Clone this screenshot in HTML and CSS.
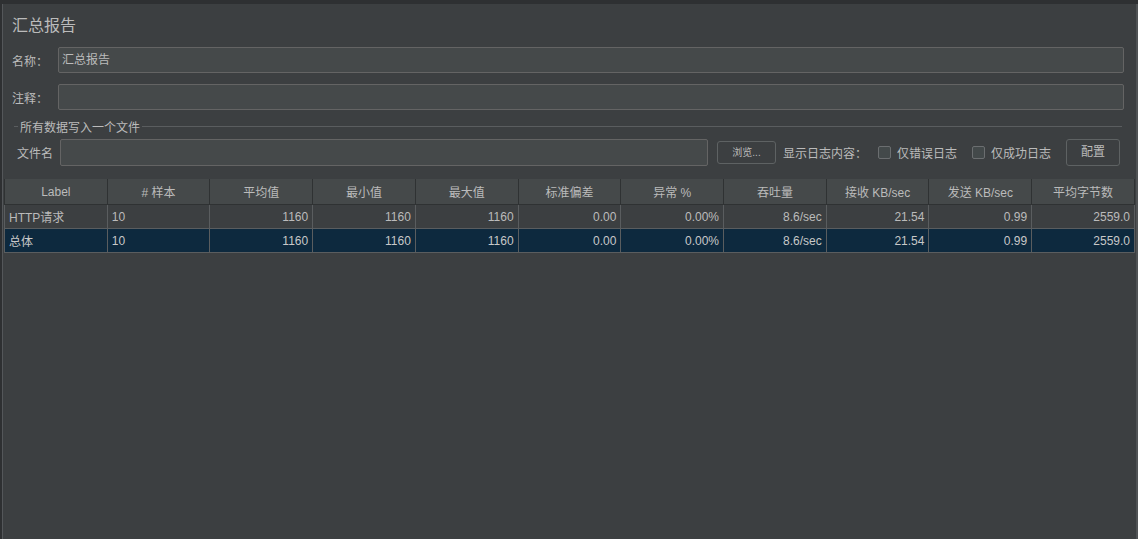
FILE: index.html
```html
<!DOCTYPE html>
<html lang="zh-CN">
<head>
    <meta charset="UTF-8">
    <meta name="viewport" content="width=device-width, initial-scale=1.0">
    <title>汇总报告</title>
    <link rel="stylesheet" href="styles.css">
</head>
<body>
    <div class="frame">
        <div class="title">汇总报告</div>
        <div class="field-row">
            <label class="field-label">名称：</label>
            <div class="text-input">汇总报告</div>
        </div>
        <div class="field-row">
            <label class="field-label">注释：</label>
            <div class="text-input"></div>
        </div>
        <div class="group">
            <div class="group-title"><span>所有数据写入一个文件</span></div>
            <div class="file-row">
                <label class="file-label">文件名</label>
                <div class="text-input file-input"></div>
                <div class="btn btn-small">浏览...</div>
                <span class="log-label">显示日志内容：</span>
                <span class="check"><i class="box"></i>仅错误日志</span>
                <span class="check"><i class="box"></i>仅成功日志</span>
                <div class="btn btn-config">配置</div>
            </div>
        </div>
        <table class="report">
            <thead>
                <tr>
                    <th>Label</th>
                    <th># 样本</th>
                    <th>平均值</th>
                    <th>最小值</th>
                    <th>最大值</th>
                    <th>标准偏差</th>
                    <th>异常 %</th>
                    <th>吞吐量</th>
                    <th>接收 KB/sec</th>
                    <th>发送 KB/sec</th>
                    <th>平均字节数</th>
                </tr>
            </thead>
            <tbody>
                <tr>
                    <td class="left">HTTP请求</td>
                    <td class="left">10</td>
                    <td>1160</td>
                    <td>1160</td>
                    <td>1160</td>
                    <td>0.00</td>
                    <td>0.00%</td>
                    <td>8.6/sec</td>
                    <td>21.54</td>
                    <td>0.99</td>
                    <td>2559.0</td>
                </tr>
                <tr class="selected">
                    <td class="left">总体</td>
                    <td class="left">10</td>
                    <td>1160</td>
                    <td>1160</td>
                    <td>1160</td>
                    <td>0.00</td>
                    <td>0.00%</td>
                    <td>8.6/sec</td>
                    <td>21.54</td>
                    <td>0.99</td>
                    <td>2559.0</td>
                </tr>
            </tbody>
        </table>
    </div>
</body>
</html>
```

FILE: styles.css
```css
html, body {
    height: 100%;
}
body {
    margin: 0;
    background-color: #2e3032;
    font-family: "Liberation Sans", "Noto Sans CJK SC", sans-serif;
    font-size: 12px;
    color: #bbbbbb;
    padding-top: 4px;
    box-sizing: border-box;
    overflow: hidden;
}
.frame {
    margin-left: 2px;
    height: 100%;
    background-color: #3c3f41;
    border-left: 1px solid #54575a;
    border-right: 2px solid #505355;
    box-sizing: border-box;
    padding: 12px 12px 0 9px;
}
.title {
    font-size: 16px;
    line-height: 20px;
    height: 20px;
}
.field-row {
    display: flex;
    align-items: center;
    margin-top: 11px;
}
.field-label {
    width: 46px;
    flex-shrink: 0;
}
.text-input {
    flex: 1;
    height: 26px;
    box-sizing: border-box;
    background-color: #45494a;
    border: 1px solid #646464;
    border-radius: 2px;
    line-height: 24px;
    padding: 0 3px;
}
.group {
    margin-top: 8px;
}
.group-title {
    display: flex;
    align-items: center;
    height: 16px;
    padding-left: 2px;
    padding-right: 2px;
}
.group-title::before {
    content: "";
    width: 4px;
    border-top: 1px solid #5a5d5f;
    margin-right: 2px;
}
.group-title::after {
    content: "";
    flex: 1;
    border-top: 1px solid #5a5d5f;
    margin-left: 2px;
}
.file-row {
    display: flex;
    align-items: center;
    margin-top: 5px;
    padding-left: 5px;
    padding-right: 4px;
}
.file-label {
    width: 43px;
    flex-shrink: 0;
}
.file-input {
    flex: none;
    width: 648px;
    height: 27px;
}
.btn {
    box-sizing: border-box;
    border: 1px solid #5e6263;
    border-radius: 3px;
    background-color: #3c3f41;
    text-align: center;
}
.btn-small {
    width: 59px;
    height: 23px;
    line-height: 21px;
    font-size: 10px;
    margin-left: 9px;
}
.log-label {
    margin-left: 7px;
}
.check {
    display: flex;
    align-items: center;
    margin-left: 11px;
}
.check + .check {
    margin-left: 15px;
}
.box {
    display: inline-block;
    width: 13px;
    height: 13px;
    box-sizing: border-box;
    border: 1px solid #6b6e70;
    border-radius: 2px;
    background-color: #43494a;
    margin-right: 6px;
}
.btn-config {
    width: 54px;
    height: 27px;
    line-height: 25px;
    font-size: 12px;
    margin-left: auto;
}
.report {
    margin-top: 13px;
    margin-left: -8px;
    width: 1131px;
    table-layout: fixed;
    border-collapse: collapse;
    font-size: 12px;
}
.report th {
    height: 25px;
    font-weight: normal;
    background-color: #45494a;
    border: 1px solid #2f3233;
    border-top: none;
    color: #bbbbbb;
    padding: 0 4px;
}
.report td {
    height: 23px;
    border: 1px solid #5a5d5f;
    text-align: right;
    padding: 0 4px;
    white-space: nowrap;
}
.report td.left {
    text-align: left;
}
.report tr.selected td {
    background-color: #0d293e;
    color: #c8c8c8;
}
```
